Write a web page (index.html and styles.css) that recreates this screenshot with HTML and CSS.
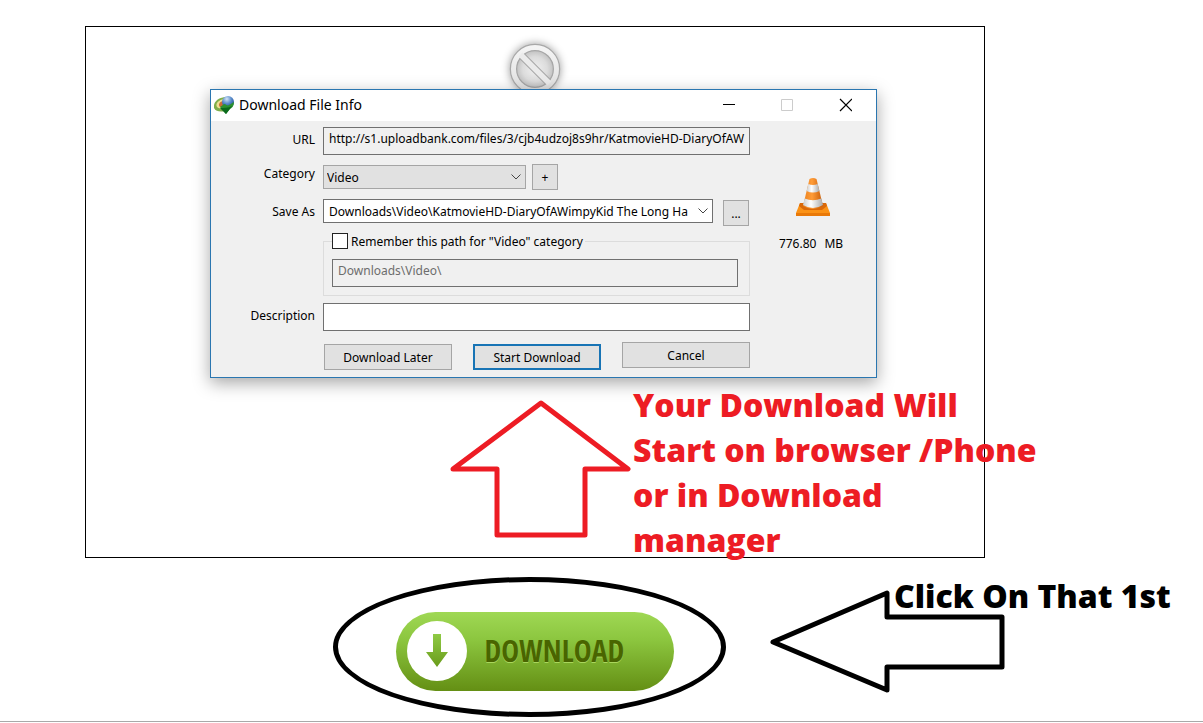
FILE: index.html
```html
<!DOCTYPE html>
<html lang="en">
<head>
<meta charset="utf-8">
<meta name="viewport" content="width=device-width, initial-scale=1">
<title>Download File Info</title>
<link rel="stylesheet" href="styles.css">
</head>
<body>
<main class="page">
  <section class="frame">
    <svg class="blocked" width="60" height="60" viewBox="0 0 60 60" aria-hidden="true">
      <defs>
        <radialGradient id="disc"><stop offset="0" stop-color="#f0f0f0"/><stop offset=".5" stop-color="#dcdcdc"/><stop offset=".8" stop-color="#bdbdbd"/></radialGradient>
        <linearGradient id="ring" x1="0" y1="0" x2="0" y2="1"><stop offset="0" stop-color="#f4f4f4"/><stop offset="1" stop-color="#e0e0e0"/></linearGradient>
      </defs>
      <circle cx="30" cy="30" r="24.500" fill="url(#disc)" stroke="#a8a8a8" stroke-width="1.500"/>
      <path d="M16 16 44 44" stroke="#a6a6a6" stroke-width="7.500"/>
      <circle cx="30" cy="30" r="18.500" fill="none" stroke="#a6a6a6" stroke-width="1.500"/>
      <circle cx="30" cy="30" r="21.500" fill="none" stroke="url(#ring)" stroke-width="5"/>
      <path d="M15.500 15.500 44.500 44.500" stroke="#ebebeb" stroke-width="5.500"/>
    </svg>

    <section class="dialog" aria-labelledby="dialog-title">
      <header class="titlebar">
        <svg class="app-icon" width="20" height="20" viewBox="0 0 20 20" aria-hidden="true">
          <defs><radialGradient id="globe" cx=".4" cy=".25" r=".8"><stop offset="0" stop-color="#d3e5f8"/><stop offset=".5" stop-color="#5588c8"/><stop offset="1" stop-color="#1b4288"/></radialGradient></defs>
          <path d="M11 2C3 3-1 8 0 13c2 4 7 4 11 3l2-4z" fill="#7fae4a"/>
          <path d="M10 4C4 5 1 9 3 12c2 2 6 2 9 1z" fill="#ecdf92"/>
          <path d="M9 6c-4 1-5 4-3 6l6 1z" fill="#cc6a35"/>
          <circle cx="14" cy="7" r="6" fill="url(#globe)"/>
          <path d="M6 12c2-1 3-3 5-3 1 1 3 2 4 1 2-1 3-2 5-3 0 4-2 6-4 7l-4 5z" fill="#2c9130"/>
          <path d="M6 13c4 0 8 0 12-2l-6 8z" fill="#0b6a1d"/>
        </svg>
        <h1 class="title" id="dialog-title">Download File Info</h1>
        <div class="window-buttons">
          <button type="button" aria-label="Minimize"><svg width="14" height="14" viewBox="0 0 14 14"><path d="M1 6.5h12" stroke="#000"/></svg></button>
          <button type="button" aria-label="Maximize" disabled><svg width="14" height="14" viewBox="0 0 14 14"><path d="M1.5 1.5h11v11h-11z" fill="none" stroke="#ccc"/></svg></button>
          <button type="button" aria-label="Close"><svg width="14" height="14" viewBox="0 0 14 14"><path d="m2 1 12 12M14 1 2 13" stroke="#000" stroke-width="1.2"/></svg></button>
        </div>
      </header>

      <form class="form">
        <div class="rows">
          <div class="row">
            <label for="url">URL</label>
            <input class="field readonly" id="url" type="text" readonly value="http://s1.uploadbank.com/files/3/cjb4udzoj8s9hr/KatmovieHD-DiaryOfAW">
          </div>
          <div class="row category-row">
            <label for="category">Category</label>
            <div class="pair">
              <span class="combo combo-short">
                <select class="grey" id="category"><option>Video</option></select>
                <svg width="10" height="6" viewBox="0 0 10 6" aria-hidden="true"><path d="m.5.5 4.5 4.5L9.500.5" fill="none" stroke="#444"/></svg>
              </span>
              <button class="small" type="button" aria-label="Add category">+</button>
            </div>
          </div>
          <div class="row">
            <label for="path">Save As</label>
            <div class="pair wide-pair">
              <span class="combo combo-long">
                <select class="white" id="path"><option>Downloads\Video\KatmovieHD-DiaryOfAWimpyKid The Long Ha</option></select>
                <svg width="10" height="6" viewBox="0 0 10 6" aria-hidden="true"><path d="m.5.5 4.5 4.5L9.500.5" fill="none" stroke="#444"/></svg>
              </span>
              <button class="small lower" type="button" aria-label="Browse">...</button>
            </div>
          </div>
          <div class="row remember-row">
            <fieldset class="group">
              <legend><input id="remember" type="checkbox"><label for="remember">Remember this path for "Video" category</label></legend>
              <input class="field readonly" type="text" aria-label="Category path" disabled value="Downloads\Video\">
            </fieldset>
          </div>
          <div class="row">
            <label for="description">Description</label>
            <input class="field" id="description" type="text">
          </div>
          <div class="actions">
            <button type="button">Download Later</button>
            <button class="primary" type="button">Start Download</button>
            <button class="cancel" type="button">Cancel</button>
          </div>
        </div>
        <aside class="file">
          <svg width="36" height="40" viewBox="0 0 36 40" aria-hidden="true">
            <defs>
              <linearGradient id="orange"><stop offset="0" stop-color="#e9801c"/><stop offset=".45" stop-color="#ff9c38"/><stop offset="1" stop-color="#c65a05"/></linearGradient>
              <linearGradient id="white"><stop offset="0" stop-color="#ccc"/><stop offset=".4" stop-color="#fff"/><stop offset="1" stop-color="#aaa"/></linearGradient>
            </defs>
            <path d="M5 26h26l4 10v3H1v-3z" fill="#fb9216"/>
            <path d="M1 36h34v3H1z" fill="#e97908"/>
            <path d="M5 26h26l1 3-5 4H9l-5-4z" fill="#d96809"/>
            <path d="M14.500 2Q18 0 21.500 2L28 29Q18 35 8 29z" fill="url(#orange)"/>
            <path d="M13.300 7Q18 9 22.700 7L24.500 14Q18 17 11.500 14z" fill="url(#white)"/>
            <path d="M9.700 21.500Q18 25 26.300 21.500L28 28Q18 34 8 28z" fill="url(#white)"/>
          </svg>
          <p class="size"><span>776.80</span><span>MB</span></p>
        </aside>
      </form>
    </section>

    <div class="note">
      <svg class="up-arrow" width="182" height="140" viewBox="0 0 182 140" aria-hidden="true"><path d="M91 4 178 70H135V136H47V70H3z"/></svg>
      <p class="note-text">Your Download Will<br>Start on browser /Phone<br>or in Download<br>manager</p>
    </div>
  </section>

  <section class="prompt">
    <div class="ring">
      <button class="download" type="button">
        <span class="download-icon">
          <svg width="24" height="34" viewBox="0 0 24 34" aria-hidden="true">
            <defs><linearGradient id="leaf" x1="0" y1="0" x2="0" y2="1"><stop offset="0" stop-color="#8fca45"/><stop offset="1" stop-color="#6a9c1b"/></linearGradient></defs>
            <path d="M8 0h8v18h7L12 33 1 18h7z" fill="url(#leaf)"/>
          </svg>
        </span>
        <span class="download-text">DOWNLOAD</span>
      </button>
    </div>
    <div class="hint">
      <svg class="left-arrow" width="236" height="106" viewBox="0 0 236 106" aria-hidden="true"><path d="M4 53 118 4V28H233V78H118V101z"/></svg>
      <p class="hint-text">Click On That 1st</p>
    </div>
  </section>
</main>
</body>
</html>
```
FILE: styles.css
```css
* { box-sizing: border-box; }
body { margin: 0; background: #fff; color: #000; font-family: "Noto Sans", sans-serif; font-size: 12px; }
p, h1 { margin: 0; }
button, input, select { font: inherit; color: inherit; border-radius: 0; margin: 0; }

.page { padding-top: 26px; border-bottom: 1px solid #a9a9a9; }
.frame { display: flex; flex-direction: column; margin: 0 218px 0 85px; border: 1px solid #000; }

.blocked { align-self: center; margin-top: 12px; overflow: visible; filter: drop-shadow(0 0 4px rgba(0, 0, 0, .4)); }
.dialog { position: relative; width: 667px; margin: -10px 0 0 124px; border: 1px solid #2a76b0; background: #f0f0f0; box-shadow: 0 5px 16px rgba(0, 0, 0, .35); }
.titlebar { display: flex; align-items: center; height: 31px; padding: 0 2px 1px 3px; background: #fff; }
.app-icon { margin-right: 5px; }
.title { flex: 1; font: 400 14px/20px "Noto Sans", sans-serif; }
.window-buttons { display: flex; }
.window-buttons button { display: grid; place-items: center; width: 58px; height: 30px; padding: 0; border: 0; background: none; }

.form { display: grid; grid-template-columns: 539px 1fr; padding: 6px 0 7px; }
.row { display: grid; grid-template-columns: 104px 1fr; column-gap: 8px; margin-bottom: 9px; }
.row > label { padding-top: 5px; line-height: 16px; text-align: right; }
.category-row > label { padding-top: 2px; }
.field { width: 100%; height: 28px; padding: 0 0 5px 5px; border: 1px solid #707070; background: #fff; }
.row > .field:first-of-type { padding-right: 2px; }
.readonly { background: #f0f0f0; }
.readonly:disabled { color: #6d6d6d; }
.pair { display: flex; gap: 6px; align-items: center; height: 26px; }
.wide-pair { gap: 10px; align-items: flex-start; height: 27px; }
.combo { display: grid; align-items: center; }
.combo select { grid-area: 1 / 1; width: 100%; height: 24px; border: 1px solid #707070; appearance: none; }
.combo svg { grid-area: 1 / 1; justify-self: end; margin-right: 5px; pointer-events: none; }
.combo-short { width: 203px; }
.combo-long { width: 390px; }
.combo .grey { padding: 0 20px 0 3px; background: #e1e1e1; border-color: #a5a5a5; }
.combo .white { padding: 0 20px 0 5px; background: #fff; }
.small { width: 26px; height: 26px; padding: 0; border: 1px solid #a5a5a5; background: #e1e1e1; }
.lower { align-self: flex-end; }

.remember-row { margin: -2px 0 7px; }
.group { grid-column: 2; min-width: 0; margin: 0; padding: 10px 11px 8px 8px; border: 1px solid #dcdcdc; }
.group legend { display: flex; align-items: center; gap: 3px; height: 16px; padding: 0 2px 0 0; }
.group legend input { width: 16px; height: 16px; border: 1px solid #222; background: #fff; appearance: none; }
.group .field { display: block; }

.actions { display: grid; grid-template-columns: repeat(3, 128px); justify-content: space-between; margin: 11px 0 0 113px; height: 28px; align-items: end; }
.actions button { height: 26px; padding: 0; border: 1px solid #a5a5a5; background: #e1e1e1; }
.actions .primary { border: 2px solid #1874b5; }
.actions .cancel { align-self: start; }

.file { display: flex; flex-direction: column; align-items: center; padding-top: 50px; }
.size { display: flex; gap: 8px; margin: 19px 4px 0 0; line-height: 16px; }

.note { position: relative; display: flex; height: 179px; padding-left: 364px; }
.up-arrow { flex: none; margin-top: 21px; }
.up-arrow path { fill: none; stroke: #ed1c24; stroke-width: 5; stroke-linejoin: round; }
.note-text, .hint-text { font: 800 32px/45px "Open Sans", sans-serif; white-space: nowrap; }
.note-text { margin: 4px 0 0 1px; color: #ed1c24; }

.prompt { display: flex; padding: 19px 0 4px 333px; }
.ring { display: flex; flex: none; align-items: center; justify-content: center; width: 393px; height: 140px; padding: 8px 0 0 10px; border: 5px solid #000; border-radius: 50%; }
.download { display: flex; align-items: center; gap: 18px; width: 278px; height: 79px; padding: 0 0 0 11px; border: 0; border-radius: 40px; background: linear-gradient(#9fd854, #8cc63f 35%, #648f14); }
.download-icon { display: grid; place-items: center; width: 60px; height: 60px; border-radius: 50%; background: #fff; }
.download-text { color: #496500; font: 700 30px/40px "Open Sans Condensed", "Liberation Sans Narrow", "Liberation Sans", sans-serif; text-shadow: 0 1px 0 #a9d65c; }
.hint { display: grid; margin: 12px 0 0 43px; align-items: start; }
.left-arrow { grid-area: 1 / 1; }
.left-arrow path { fill: none; stroke: #000; stroke-width: 5; stroke-linejoin: round; }
.hint-text { grid-area: 1 / 1; margin: -16px 0 0 125px; }

@media (max-width: 1050px) {
  .frame { margin-right: 24px; margin-left: 24px; min-width: 815px; }
  .prompt { padding-left: 24px; }
}
```
